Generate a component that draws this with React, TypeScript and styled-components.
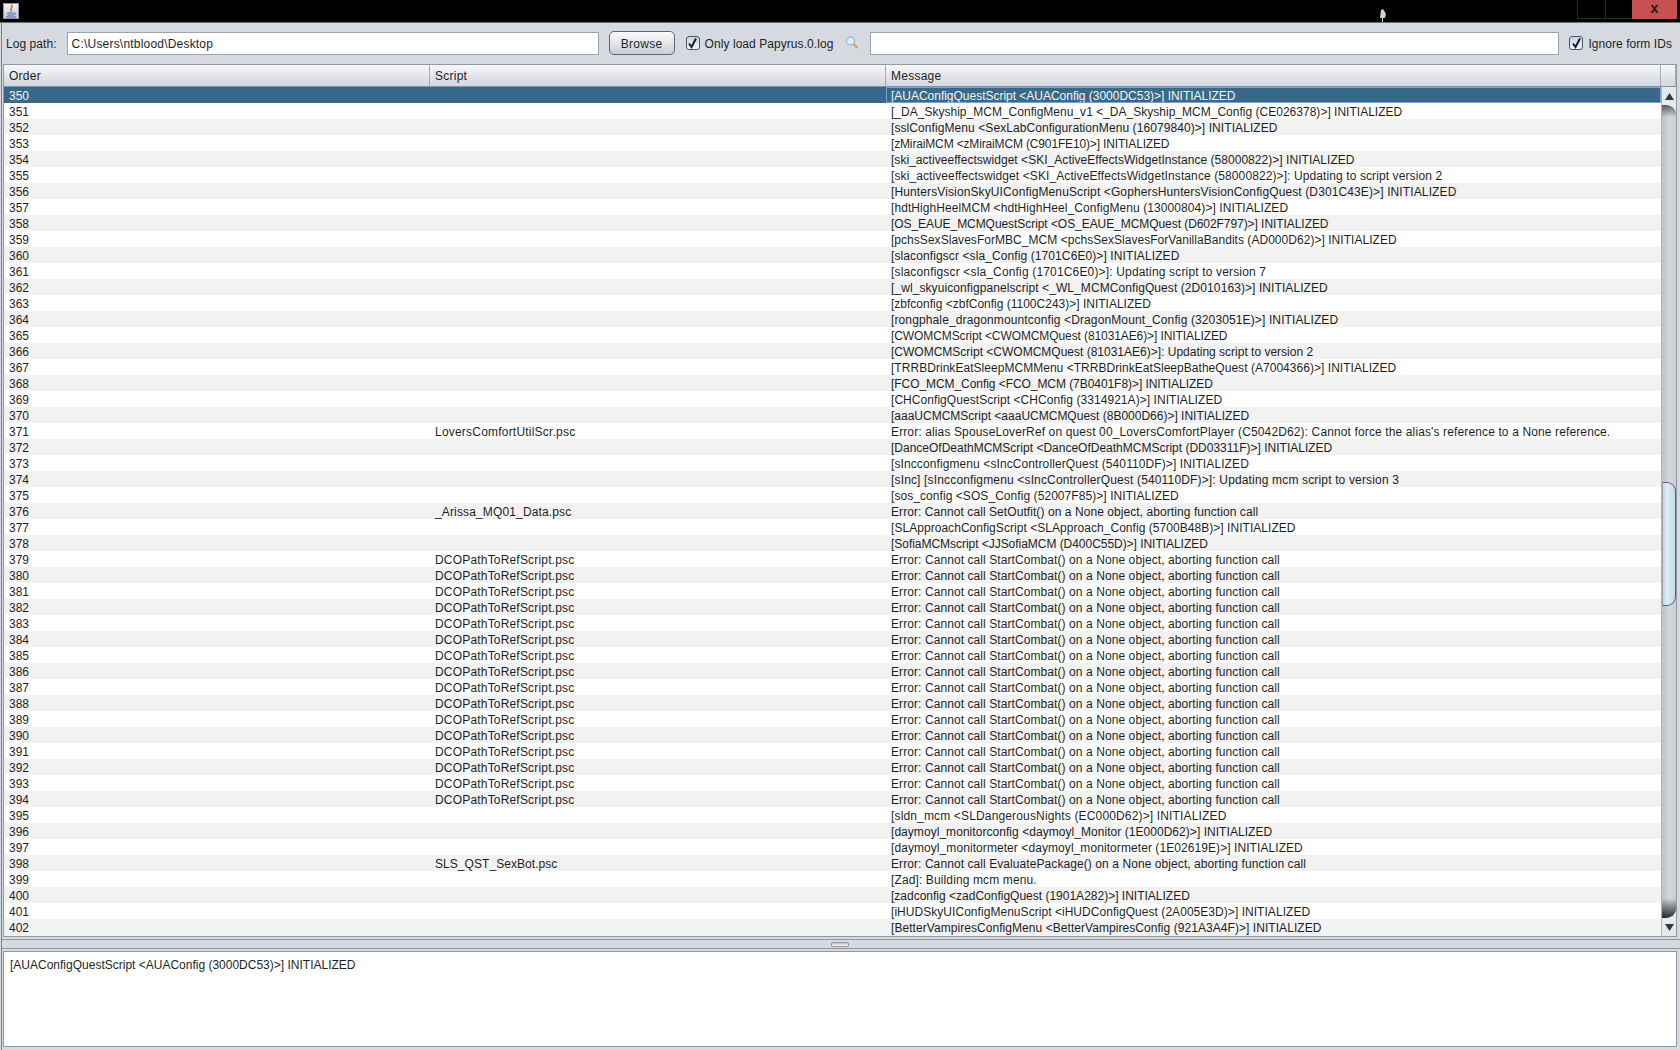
import React from "react";
import styled, { createGlobalStyle } from "styled-components";

const GlobalStyle = createGlobalStyle`
  html, body {
    margin: 0;
    padding: 0;
    background: #d6d9df;
    overflow: hidden;
  }
  body {
    font-family: "Liberation Sans", Arial, sans-serif;
    font-size: 12px;
    color: #1f1f1f;
  }
`;

const Window = styled.div`
  width: 1680px;
  height: 1050px;
  display: flex;
  flex-direction: column;
  background: #d6d9df;
  overflow: hidden;
`;

const TitleBar = styled.div`
  position: relative;
  height: 22px;
  flex: none;
  background: #000;
  border-bottom: 1px solid #6b6e73;
  display: flex;
  justify-content: space-between;
  padding-left: 3px;
`;

const AppIcon = styled.div`
  width: 16px;
  height: 16px;
  margin-top: 3px;
  box-sizing: border-box;
  background: linear-gradient(#eef1f6, #c3cddd);
  border: 1px solid #8b96a8;
  display: flex;
  align-items: center;
  justify-content: center;
`;

const Cursor = styled.svg`
  position: absolute;
  left: 1379px;
  top: 9px;
`;

const WindowButtons = styled.div`
  display: flex;
  height: 19px;
  margin-right: 3px;
`;

const WindowButton = styled.div<{ $width: number }>`
  width: ${(p) => p.$width}px;
  box-sizing: border-box;
  border: 1px solid #2c2c2c;
  border-top: none;
  border-right: none;
`;

const CloseButton = styled.div`
  width: 45px;
  background: #c75050;
  color: #1a1a1a;
  font-weight: bold;
  font-size: 14px;
  line-height: 16px;
  display: flex;
  justify-content: center;
`;

const Content = styled.div`
  flex: 1;
  min-height: 0;
  display: flex;
  flex-direction: column;
  margin-left: 1px;
  border-left: 1px solid #7c8088;
`;

const Toolbar = styled.div`
  height: 41px;
  flex: none;
  box-sizing: border-box;
  display: flex;
  align-items: center;
  padding: 0 0 1px 4px;
`;

const Label = styled.span`
  white-space: nowrap;
  letter-spacing: 0.06px;
  padding-top: 2px;
`;

const Field = styled.div<{ $width: number; $left: number }>`
  width: ${(p) => p.$width}px;
  margin-left: ${(p) => p.$left}px;
  height: 23px;
  box-sizing: border-box;
  background: #fff;
  border: 1px solid #9ea3ad;
  padding: 0 4px;
  line-height: 22px;
  letter-spacing: 0.2px;
  flex: none;
`;

const BrowseButton = styled.div`
  width: 66px;
  height: 24px;
  margin-left: 10px;
  box-sizing: border-box;
  border: 1px solid #5d6673;
  border-radius: 5px;
  background: linear-gradient(#fbfbfc, #e2e4e9 55%, #c9cdd5);
  text-align: center;
  line-height: 24px;
  letter-spacing: 0.3px;
  flex: none;
`;

const CheckBox = styled.div<{ $left: number }>`
  width: 14px;
  height: 14px;
  margin-left: ${(p) => p.$left}px;
  margin-right: 5px;
  box-sizing: border-box;
  border: 1px solid #47566a;
  border-radius: 3px;
  background: linear-gradient(#c5d3e4, #f4f7fb);
  display: flex;
  align-items: center;
  justify-content: center;
  flex: none;
`;

const SearchIcon = styled.svg`
  margin-left: 11px;
  flex: none;
`;

const TableFrame = styled.div`
  height: 873px;
  flex: none;
  margin: 0 3px 0 1px;
  box-sizing: border-box;
  border: 1px solid #9297a0;
  display: flex;
  flex-direction: column;
`;

const HeaderRow = styled.div`
  height: 22px;
  flex: none;
  display: flex;
  background: linear-gradient(#f6f7f9, #e6e8ec 45%, #d3d6dd);
  border-bottom: 1px solid #8b909a;
  box-sizing: border-box;
`;

const HeaderCell = styled.div<{ $width?: number }>`
  box-sizing: border-box;
  ${(p) => (p.$width ? `width: ${p.$width}px; flex: none;` : "flex: 1;")}
  border-right: 1px solid #a6aab3;
  padding-left: 5px;
  line-height: 23px;
  letter-spacing: 0.25px;
`;

const TableBody = styled.div`
  flex: 1;
  display: flex;
  min-height: 0;
`;

const Rows = styled.div`
  flex: 1;
  min-width: 0;
  overflow: hidden;
  background: #f2f2f2;
`;

const Row = styled.div<{ $odd: boolean; $selected: boolean }>`
  display: flex;
  height: 16px;
  line-height: 18px;
  background: ${(p) => (p.$selected ? "#39698a" : p.$odd ? "#f2f2f2" : "#fff")};
  color: ${(p) => (p.$selected ? "#f2f5f8" : "#1f1f1f")};
  white-space: nowrap;
`;

const Cell = styled.div<{ $width?: number; $focus?: boolean; $track?: number }>`
  box-sizing: border-box;
  ${(p) => (p.$width ? `width: ${p.$width}px; flex: none;` : "flex: 1;")}
  padding-left: 5px;
  overflow: hidden;
  letter-spacing: ${(p) => (p.$track ?? 0).toFixed(3)}px;
  ${(p) => (p.$focus ? "outline: 1px solid #73a4d1; outline-offset: -1px;" : "")}
`;

const ScrollBar = styled.div`
  width: 15px;
  flex: none;
  display: flex;
  flex-direction: column;
  background: #e7e9ed;
  border-left: 1px solid #b0b3bb;
  box-sizing: border-box;
`;

const ScrollArrow = styled.div<{ $height: number }>`
  height: ${(p) => p.$height}px;
  flex: none;
  display: flex;
  align-items: center;
  justify-content: center;
`;

const ScrollTrack = styled.div`
  flex: 1;
  position: relative;
  background:
    linear-gradient(rgba(50, 50, 50, 0.75), rgba(50, 50, 50, 0) 12px, rgba(30, 30, 30, 0) calc(100% - 20px), rgba(30, 30, 30, 0.95)),
    linear-gradient(90deg, #bfc1c7, #d8d9dd 60%, #c9cbd1);
  border-radius: 0 10px 10px 0 / 0 9px 9px 0;
`;

const ScrollThumb = styled.div`
  position: absolute;
  top: 377px;
  left: 0;
  right: 0;
  height: 124px;
  box-sizing: border-box;
  background: linear-gradient(90deg, #bed5e8, #dfecf6 35%, #c3d9ec);
  border: 1px solid #4d6785;
  border-left: 1px solid #9aa3ae;
  border-radius: 0 9px 9px 0;
`;

const Divider = styled.div`
  height: 10px;
  margin: 2px 0;
  flex: none;
  box-sizing: border-box;
  border-top: 1px solid #9297a0;
  border-bottom: 1px solid #9297a0;
  display: flex;
  align-items: center;
  justify-content: center;
`;

const Grip = styled.div`
  width: 18px;
  height: 5px;
  margin-left: -2px;
  box-sizing: border-box;
  border: 1px solid #9297a0;
  border-radius: 2px;
  background: linear-gradient(#bcc0c8, #fff);
`;

const DetailPane = styled.div`
  height: 96px;
  flex: none;
  margin: 0 3px 0 1px;
  box-sizing: border-box;
  background: #fff;
  border: 1px solid #9297a0;
  padding: 5px 6px;
  line-height: 16px;
`;

// order, script, message, px to stretch the message by (the original font is hinted wider or narrower)
type LogRow = [number, string, string, number];

const stc = "Error: Cannot call StartCombat() on a None object, aborting function call";
const dco = "DCOPathToRefScript.psc";

const scriptStretch: Record<string, number> = {
  "LoversComfortUtilScr.psc": 5,
  "_Arissa_MQ01_Data.psc": 3,
  [dco]: 4,
  "SLS_QST_SexBot.psc": 1,
};

const rows: LogRow[] = [
  [350, "", "[AUAConfigQuestScript <AUAConfig (3000DC53)>] INITIALIZED", -1],
  [351, "", "[_DA_Skyship_MCM_ConfigMenu_v1 <_DA_Skyship_MCM_Config (CE026378)>] INITIALIZED", 1],
  [352, "", "[sslConfigMenu <SexLabConfigurationMenu (16079840)>] INITIALIZED", 5],
  [353, "", "[zMiraiMCM <zMiraiMCM (C901FE10)>] INITIALIZED", -7],
  [354, "", "[ski_activeeffectswidget <SKI_ActiveEffectsWidgetInstance (58000822)>] INITIALIZED", 3],
  [355, "", "[ski_activeeffectswidget <SKI_ActiveEffectsWidgetInstance (58000822)>]: Updating to script version 2", 10],
  [356, "", "[HuntersVisionSkyUIConfigMenuScript <GophersHuntersVisionConfigQuest (D301C43E)>] INITIALIZED", 11],
  [357, "", "[hdtHighHeelMCM <hdtHighHeel_ConfigMenu (13000804)>] INITIALIZED", 5],
  [358, "", "[OS_EAUE_MCMQuestScript <OS_EAUE_MCMQuest (D602F797)>] INITIALIZED", -4],
  [359, "", "[pchsSexSlavesForMBC_MCM <pchsSexSlavesForVanillaBandits (AD000D62)>] INITIALIZED", 3],
  [360, "", "[slaconfigscr <sla_Config (1701C6E0)>] INITIALIZED", 5],
  [361, "", "[slaconfigscr <sla_Config (1701C6E0)>]: Updating script to version 7", 11],
  [362, "", "[_wl_skyuiconfigpanelscript <_WL_MCMConfigQuest (2D010163)>] INITIALIZED", 6],
  [363, "", "[zbfconfig <zbfConfig (1100C243)>] INITIALIZED", 0],
  [364, "", "[rongphale_dragonmountconfig <DragonMount_Config (3203051E)>] INITIALIZED", 9],
  [365, "", "[CWOMCMScript <CWOMCMQuest (81031AE6)>] INITIALIZED", -5],
  [366, "", "[CWOMCMScript <CWOMCMQuest (81031AE6)>]: Updating script to version 2", 0],
  [367, "", "[TRRBDrinkEatSleepMCMMenu <TRRBDrinkEatSleepBatheQuest (A7004366)>] INITIALIZED", 3],
  [368, "", "[FCO_MCM_Config <FCO_MCM (7B0401F8)>] INITIALIZED", -3],
  [369, "", "[CHConfigQuestScript <CHConfig (3314921A)>] INITIALIZED", 3],
  [370, "", "[aaaUCMCMScript <aaaUCMCMQuest (8B000D66)>] INITIALIZED", 0],
  [371, "LoversComfortUtilScr.psc", "Error: alias SpouseLoverRef on quest 00_LoversComfortPlayer (C5042D62): Cannot force the alias's reference to a None reference.", 16],
  [372, "", "[DanceOfDeathMCMScript <DanceOfDeathMCMScript (DD03311F)>] INITIALIZED", 0],
  [373, "", "[sIncconfigmenu <sIncControllerQuest (540110DF)>] INITIALIZED", 6],
  [374, "", "[sInc] [sIncconfigmenu <sIncControllerQuest (540110DF)>]: Updating mcm script to version 3", 14],
  [375, "", "[sos_config <SOS_Config (52007F85)>] INITIALIZED", 3],
  [376, "_Arissa_MQ01_Data.psc", "Error: Cannot call SetOutfit() on a None object, aborting function call", 5],
  [377, "", "[SLApproachConfigScript <SLApproach_Config (5700B48B)>] INITIALIZED", 3],
  [378, "", "[SofiaMCMscript <JJSofiaMCM (D400C55D)>] INITIALIZED", -2],
  ...Array.from({ length: 16 }, (_, i): LogRow => [379 + i, dco, stc, 6]),
  [395, "", "[sldn_mcm <SLDangerousNights (EC000D62)>] INITIALIZED", 8],
  [396, "", "[daymoyl_monitorconfig <daymoyl_Monitor (1E000D62)>] INITIALIZED", 3],
  [397, "", "[daymoyl_monitormeter <daymoyl_monitormeter (1E02619E)>] INITIALIZED", 5],
  [398, "SLS_QST_SexBot.psc", "Error: Cannot call EvaluatePackage() on a None object, aborting function call", 6],
  [399, "", "[Zad]: Building mcm menu.", 3],
  [400, "", "[zadconfig <zadConfigQuest (1901A282)>] INITIALIZED", 0],
  [401, "", "[iHUDSkyUIConfigMenuScript <iHUDConfigQuest (2A005E3D)>] INITIALIZED", 3],
  [402, "", "[BetterVampiresConfigMenu <BetterVampiresConfig (921A3A4F)>] INITIALIZED", 4],
];

const Tick = () => (
  <svg width="11" height="11" viewBox="0 0 11 11">
    <path d="M2 5.5 L4.5 9 L9 0.5" fill="none" stroke="#16202e" strokeWidth="2" />
  </svg>
);

const Arrow = ({ up }: { up?: boolean }) => (
  <svg width="9" height="7" viewBox="0 0 9 7">
    <path d={up ? "M4.5 0 L9 7 L0 7 Z" : "M0 0 L9 0 L4.5 7 Z"} fill="#33363c" />
  </svg>
);

const App = () => {
  return (
    <Window>
      <GlobalStyle />
      <TitleBar>
        <AppIcon>
          <svg width="12" height="14" viewBox="0 0 12 14">
            <path d="M6.5 0.5 C8.5 3 4.5 4 6.5 7.5" fill="none" stroke="#e07a22" strokeWidth="1.6" />
            <path d="M2 9 H9 M2.5 11 H8.5 M1 13 H11" stroke="#4b6d9b" strokeWidth="1" />
            <path d="M9 9 C11.5 9 11.5 11 8.5 11" fill="none" stroke="#4b6d9b" strokeWidth="0.8" />
          </svg>
        </AppIcon>
        <Cursor width="8" height="14" viewBox="0 0 8 14">
          <path d="M2 1 L4 0 L7 5 L6 9 H4 V13 H3 V9 H1 Z" fill="#cfd4d0" />
        </Cursor>
        <WindowButtons>
          <WindowButton $width={28} />
          <WindowButton $width={27} />
          <CloseButton>x</CloseButton>
        </WindowButtons>
      </TitleBar>
      <Content>
        <Toolbar>
          <Label>Log path:</Label>
          <Field $width={532} $left={10}>C:\Users\ntblood\Desktop</Field>
          <BrowseButton>Browse</BrowseButton>
          <CheckBox $left={11}><Tick /></CheckBox>
          <Label>Only load Papyrus.0.log</Label>
          <SearchIcon width="16" height="16" viewBox="0 0 16 16">
            <circle cx="6.5" cy="6" r="4" fill="#dceafa" stroke="#9cbcd8" strokeWidth="1.4" />
            <path d="M9.5 9 L13.5 13" stroke="#d8a050" strokeWidth="2.2" />
          </SearchIcon>
          <Field $width={689} $left={10} />
          <CheckBox $left={10}><Tick /></CheckBox>
          <Label>Ignore form IDs</Label>
        </Toolbar>
        <TableFrame>
          <HeaderRow>
            <HeaderCell $width={426}>Order</HeaderCell>
            <HeaderCell $width={456}>Script</HeaderCell>
            <HeaderCell>Message</HeaderCell>
            <HeaderCell $width={15} />
          </HeaderRow>
          <TableBody>
            <Rows>
              {rows.map(([order, script, message, stretch], i) => (
                <Row key={order} $odd={i % 2 === 0 && i > 0} $selected={i === 0}>
                  <Cell $width={426}>{order}</Cell>
                  <Cell $width={456} $track={script ? (scriptStretch[script] ?? 0) / script.length : 0}>{script}</Cell>
                  <Cell $focus={i === 0} $track={stretch / message.length}>{message}</Cell>
                </Row>
              ))}
            </Rows>
            <ScrollBar>
              <ScrollArrow $height={18}><Arrow up /></ScrollArrow>
              <ScrollTrack><ScrollThumb /></ScrollTrack>
              <ScrollArrow $height={18}><Arrow /></ScrollArrow>
            </ScrollBar>
          </TableBody>
        </TableFrame>
        <Divider><Grip /></Divider>
        <DetailPane>[AUAConfigQuestScript &lt;AUAConfig (3000DC53)&gt;] INITIALIZED</DetailPane>
      </Content>
    </Window>
  );
};

export default App;
